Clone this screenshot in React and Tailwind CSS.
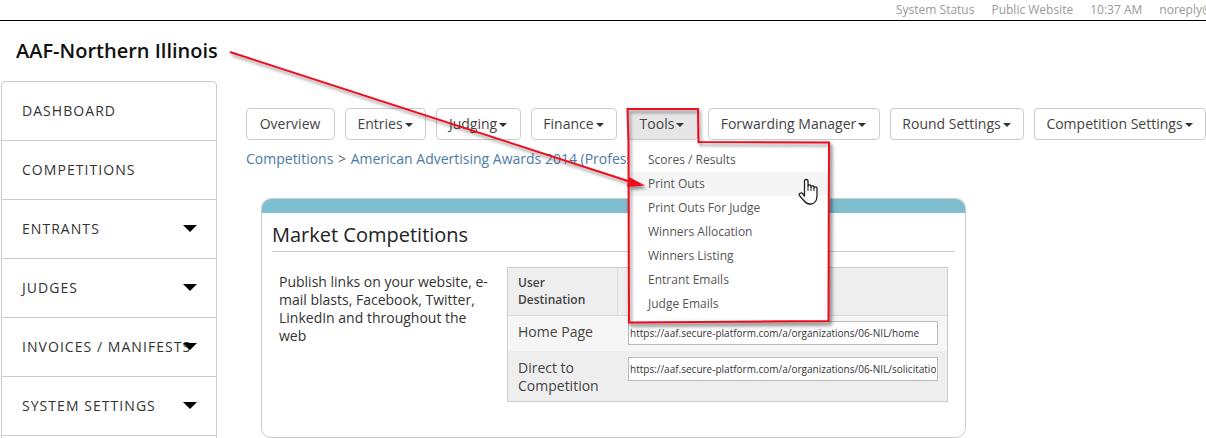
import React from "react";

const sideItems = [
  { label: "DASHBOARD" },
  { label: "COMPETITIONS" },
  { label: "ENTRANTS", caret: true },
  { label: "JUDGES", caret: true },
  { label: "INVOICES / MANIFESTS", caret: true },
  { label: "SYSTEM SETTINGS", caret: true },
];

const navItems = [
  { label: "Overview", w: "w-[89px]" },
  { label: "Entries", caret: true, w: "w-[81px]" },
  { label: "Judging", caret: true, w: "w-[85px]" },
  { label: "Finance", caret: true, w: "w-[86px]" },
  { label: "Tools", caret: true, w: "w-[71px]", active: true },
  { label: "Forwarding Manager", caret: true, w: "w-[172px]" },
  { label: "Round Settings", caret: true, w: "w-[134px]" },
  { label: "Competition Settings", caret: true, w: "w-[172px]" },
];

const toolItems = [
  "Scores / Results",
  "Print Outs",
  "Print Outs For Judge",
  "Winners Allocation",
  "Winners Listing",
  "Entrant Emails",
  "Judge Emails",
];

function NavButton({ item }) {
  return (
    <div
      className={`${item.w} shrink-0 h-[32px] pb-[2px] pr-[1px] flex items-center justify-center rounded-[4px] border border-[#cccccc] text-[14px] text-[#444444] ${
        item.active ? "bg-[#e6e6e6]" : "bg-white"
      }`}
    >
      <span>{item.label}</span>
      {item.caret && (
        <span className="ml-[2px] mt-[3px] border-x-[4px] border-t-[4px] border-x-transparent border-t-[#333333]" />
      )}
    </div>
  );
}

function SideRow({ item }) {
  return (
    <div className="relative h-[59px] shrink-0 flex items-center pl-[20px] pb-[2px] border-b border-[#cccccc] text-[14px] tracking-[1.05px] text-[#333333] whitespace-nowrap">
      {item.label}
      {item.caret && (
        <span className="absolute right-[19px] top-[25px] border-x-[7px] border-t-[7px] border-x-transparent border-t-black" />
      )}
    </div>
  );
}

function UrlInput({ value }) {
  return (
    <input
      readOnly
      value={value}
      className="w-[310px] h-[24px] px-[1px] border border-[#bbbbbb] bg-white text-[10px] text-[#333333] outline-none"
    />
  );
}

function Annotations() {
  return (
    <svg className="absolute left-0 top-0 pointer-events-none" width="1206" height="438">
      <defs>
        <filter id="soft" x="-5%" y="-5%" width="110%" height="110%">
          <feDropShadow dx="2" dy="3" stdDeviation="1.5" floodColor="#000000" floodOpacity="0.4" />
        </filter>
      </defs>
      <g filter="url(#soft)">
        <path d="M230 52 L631 182" stroke="#ee0a1e" strokeWidth="2" fill="none" />
        <path d="M629 177 L645 185.5 L627 187 Z" fill="#ee0a1e" />
        <path
          d="M627.5 109 L698 109 L698.5 142 L829 142.5 L828.5 321 L629 322.5 L628.5 143 Z"
          stroke="#ee0a1e"
          strokeWidth="2"
          fill="none"
        />
      </g>
    </svg>
  );
}

function HandCursor() {
  return (
    <svg className="absolute left-[798px] top-[178px]" width="22" height="28" viewBox="0 0 22 28">
      <path
        d="M6.5 3 C6.5 1 10 1 10 3 L10 8 C10 6.5 13 6.5 13 8 L13 9 C13 7.5 16 7.5 16 9 L16 10 C16 8.5 19 8.5 19 10 L19 18 C19 22 17 26 13 26 L11 26 C8 26 6.5 23 4 20.5 L1.5 17.5 C0.5 15.5 3 14 4.5 15.5 L6.5 18 Z"
        fill="white"
        stroke="#222222"
        strokeWidth="1.3"
        strokeLinejoin="round"
      />
      <path d="M10 8 L10 13 M13 9 L13 13 M16 10 L16 13" stroke="#222222" strokeWidth="1" fill="none" />
    </svg>
  );
}

export default function App() {
  return (
    <div className="relative w-[1206px] h-[438px] overflow-hidden bg-white font-['Open_Sans',sans-serif]">
      <div className="h-[21px] pl-[896px] flex items-center gap-[17px] border-b border-black text-[12px] text-[#999999] whitespace-nowrap">
        <span>System Status</span>
        <span>Public Website</span>
        <span>10:37 AM</span>
        <span>noreply@aaf.secure-platform.com</span>
      </div>

      <h1 className="pl-[16px] pt-[16px] h-[60px] text-[20px] leading-[27px] font-semibold text-[#111111]">
        AAF-Northern Illinois
      </h1>

      <div className="flex items-start">
        <div className="ml-[1px] w-[216px] shrink-0 h-[400px] flex flex-col rounded-t-[4px] border border-[#cccccc]">
          {sideItems.map((item) => (
            <SideRow key={item.label} item={item} />
          ))}
        </div>

        <div className="ml-[29px] flex-1 min-w-0 pt-[27px]">
          <div className="flex gap-[10px]">
            {navItems.map((item) => (
              <NavButton key={item.label} item={item} />
            ))}
          </div>

          <div className="mt-[9px] text-[14px] leading-[19px] text-[#4a7ba7] whitespace-nowrap">
            Competitions <span className="mx-[1px] text-[#666666]">&gt;</span> American Advertising Awards 2014 (Professional)
          </div>

          <div className="mt-[30px] ml-[15px] w-[705px] h-[240px] rounded-[10px] border border-[#cccccc] overflow-hidden">
            <div className="h-[15px] -mt-px -mx-px bg-[#7fbecf]" />
            <div className="mx-[10px] pt-[8px] pb-[2px] border-b border-[#cccccc] text-[20px] leading-[28px] text-[#222222]">
              Market Competitions
            </div>
            <div className="flex items-start mt-[13px] ml-[17px]">
              <p className="w-[215px] pt-[8px] text-[14px] leading-[18px] text-[#333333]">
                Publish links on your website, e-mail blasts, Facebook, Twitter, LinkedIn and throughout the web
              </p>
              <div className="ml-[13px] mt-[2px] w-[441px] shrink-0 border border-[#cccccc] text-[14px] text-[#444444]">
                <div className="flex h-[48px] bg-[#eeeeee] border-b border-[#d8d8d8]">
                  <div className="w-[110px] pl-[10px] pr-[20px] pt-[6px] border-r border-[#dddddd] text-[12px] leading-[17px] font-semibold">
                    User Destination
                  </div>
                  <div className="flex-1" />
                </div>
                <div className="flex h-[35px] bg-[#f6f6f6] pt-[5px] items-start">
                  <div className="w-[120px] pl-[10px]">Home Page</div>
                  <UrlInput value="https://aaf.secure-platform.com/a/organizations/06-NIL/home" />
                </div>
                <div className="flex h-[50px] bg-[#eeeeee] pt-[6px] items-start">
                  <div className="w-[120px] pl-[10px] pt-[2px] leading-[18px]">Direct to Competition</div>
                  <UrlInput value="https://aaf.secure-platform.com/a/organizations/06-NIL/solicitations/1234" />
                </div>
              </div>
            </div>
          </div>
        </div>
      </div>

      <div className="absolute left-[629px] top-[142px] w-[200px] h-[180px] bg-white pt-[6px] shadow-[2px_3px_6px_rgba(0,0,0,0.3)]">
        {toolItems.map((label) => (
          <div
            key={label}
            className={`h-[24px] pl-[19px] flex items-center text-[12px] text-[#555555] ${
              label === "Print Outs" ? "bg-[#f5f5f5]" : ""
            }`}
          >
            {label}
          </div>
        ))}
      </div>

      <Annotations />
      <HandCursor />
    </div>
  );
}
